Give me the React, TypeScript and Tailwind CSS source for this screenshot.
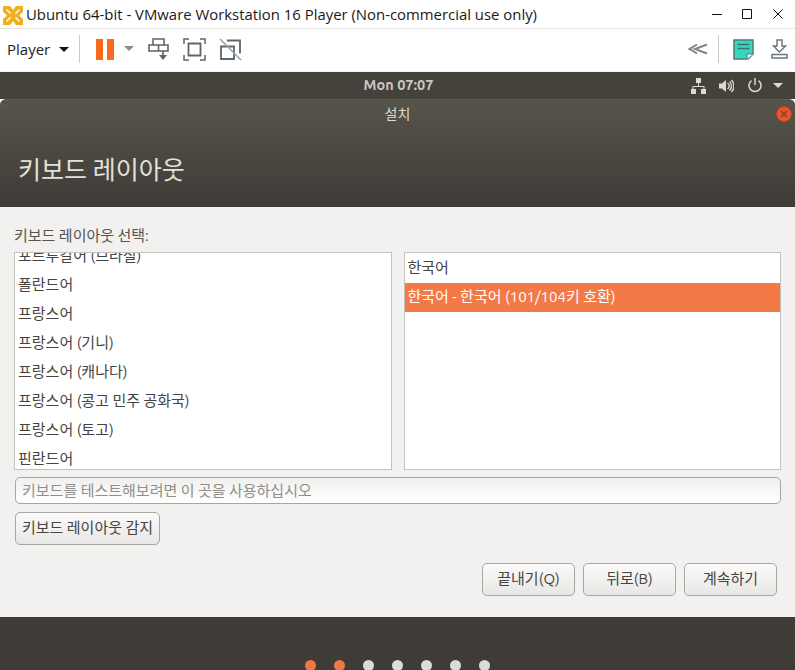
const KR = "font-['Ubuntu','Noto_Sans_CJK_KR','Noto_Sans',sans-serif]";

const layouts = ['포르투갈어 (브라질)', '폴란드어', '프랑스어', '프랑스어 (기니)', '프랑스어 (캐나다)', '프랑스어 (콩고 민주 공화국)', '프랑스어 (토고)', '핀란드어'];

const ListRow = ({ label, selected }: { label: string; selected?: boolean }) => (
  <div className={`h-[29px] shrink-0 pl-[3px] flex items-center text-[15px] ${selected ? 'bg-[#f37a47] text-white' : 'text-[#45443f]'}`}>
    {label}
  </div>
);

const GtkButton = ({ label, className }: { label: string; className: string }) => (
  <button className={`h-[33px] flex items-center justify-center rounded-[5px] border border-[#a8a6a2] bg-gradient-to-b from-[#fbfafa] to-[#e9e7e5] text-[15px] text-[#45443f] ${className}`}>
    {label}
  </button>
);

const VmwareLogo = () => (
  <svg width="22" height="22" viewBox="0 0 22 22">
    <rect x="1" y="3" width="20" height="19" fill="#f2ae1c" />
    <path d="M8 3h6l-3 4zM1 9v7l4-3.500zM21 9v7l-4-3.500zM8 22h6l-3-4z" fill="#fff" />
    <path d="M4.500 6.500L8.500 10.500M17.500 6.500l-4 4M4.500 18.500l4-4M17.500 18.500l-4-4" stroke="#fff" strokeWidth="1.500" />
  </svg>
);

const ToolbarIcons = () => (
  <>
    <div className="ml-[16px] flex gap-[4px]">
      <div className="w-[7px] h-[21px] bg-[#fb6a1c]" />
      <div className="w-[7px] h-[21px] bg-[#fb6a1c]" />
    </div>
    <svg className="ml-[10px]" width="10" height="6" viewBox="0 0 10 6"><path d="M0 0h10L5 5z" fill="#8b8b8b" /></svg>
    <svg className="ml-[14px]" width="21" height="23" viewBox="0 0 21 23" fill="none" stroke="#5d666d" strokeWidth="1.600">
      <path d="M5 1h11v6H5zM1 7h19v6H1zM10.500 7v6M15 13v4" />
      <path d="M11 17h8l-4 5z" fill="#5d666d" stroke="none" />
    </svg>
    <svg className="ml-[14px]" width="23" height="23" viewBox="0 0 23 23" fill="none" stroke="#5d666d" strokeWidth="1.500">
      <path d="M1 6V1h5M17 1h5v5M22 17v5h-5M6 22H1v-5" />
      <path d="M5.500 5.500h12v12h-12z" strokeWidth="1.800" />
    </svg>
    <svg className="ml-[13px]" width="23" height="23" viewBox="0 0 23 23" fill="none">
      <path d="M8 2.500h13v13M15 21H2V8.500h13z" stroke="#5d666d" strokeWidth="1.800" />
      <path d="M1 1l21 21" stroke="#9aa3aa" strokeWidth="1.600" />
    </svg>
  </>
);

const StatusIcons = () => (
  <div className="absolute right-[12px] top-0 h-full flex items-center">
    <svg width="15" height="16" viewBox="0 0 15 16" fill="#dcdad5">
      <path d="M5 0h5v5H5zM0 11h5v5H0zM10 11h5v5h-5z" />
      <path d="M7 5h1v3h5.500v3h-1V9h-10v2h-1V8H7z" />
    </svg>
    <svg className="ml-[13px]" width="15" height="14" viewBox="0 0 15 14" fill="none">
      <path d="M0 4.500h3L7 1v12L3 9.500H0z" fill="#dcdad5" />
      <path d="M8.500 4a3.500 3.500 0 0 1 0 6M10.500 2.500a6 6 0 0 1 0 9M12.500 1a8.500 8.500 0 0 1 0 12" stroke="#dcdad5" strokeWidth="1.400" />
    </svg>
    <svg className="ml-[14px]" width="14" height="15" viewBox="0 0 14 15" fill="none" stroke="#dcdad5" strokeWidth="1.500">
      <path d="M7 0v7" />
      <path d="M3.500 2.700a6 6 0 1 0 7 0" />
    </svg>
    <svg className="ml-[11px]" width="10" height="5" viewBox="0 0 10 5"><path d="M0 0h10L5 5z" fill="#dcdad5" /></svg>
  </div>
);

export default function App() {
  return (
    <div className="w-[795px] h-[670px] overflow-hidden flex flex-col bg-white">
      {/* vmware chrome */}
      <div className="h-[28px] shrink-0 flex items-center pl-[2px] relative">
        <VmwareLogo />
        <span className="ml-[2px] text-[14.900px] text-[#1a1a1a] font-['Open_Sans',sans-serif] whitespace-nowrap">
          Ubuntu 64-bit - VMware Workstation 16 Player (Non-commercial use only)
        </span>
        <div className="ml-auto flex items-center mr-[11px] gap-[20px]">
          <svg width="10" height="10" viewBox="0 0 10 10"><path d="M0 5.500h10" stroke="#111" /></svg>
          <svg width="11" height="11" viewBox="0 0 11 11"><path d="M.5.500h9v9h-9z" fill="none" stroke="#111" /></svg>
          <svg width="11" height="11" viewBox="0 0 11 11"><path d="M.5.500l9 9M9.500.500l-9 9" stroke="#111" /></svg>
        </div>
      </div>
      <div className="h-[44px] shrink-0 border-t border-[#e4e4e4] border-b-[1px] border-b-[#f4f4f4] flex items-center pl-[7px] pr-[7px] pb-[2px]">
        <span className="text-[15px] text-[#222] font-['Open_Sans',sans-serif]">Player</span>
        <svg className="ml-[9px]" width="10" height="5" viewBox="0 0 10 5"><path d="M0 0h10L5 5z" fill="#111" /></svg>
        <div className="ml-[10px] w-px h-[28px] bg-[#c9c9c9]" />
        <ToolbarIcons />
        <svg className="ml-auto" width="20" height="12" viewBox="0 0 20 12" fill="none" stroke="#7d868d" strokeWidth="2">
          <path d="M9 1.500L1.500 6 9 10.500M19 1.500L7 6l12 4.500" />
        </svg>
        <div className="ml-[10px] w-px h-[28px] bg-[#c9c9c9]" />
        <svg className="ml-[14px]" width="21" height="21" viewBox="0 0 21 21">
          <path d="M1 1h19v14l-5 5H1z" fill="#36d8bd" stroke="#4c7a7c" strokeWidth="1.500" />
          <path d="M4.500 5.500h12M4.500 9.500h12" stroke="#3f6f73" strokeWidth="1.500" />
          <path d="M14 20v-5h6" fill="#fff" stroke="#4c7a7c" />
        </svg>
        <svg className="ml-[17px]" width="17" height="20" viewBox="0 0 17 20" fill="none" stroke="#6d767d" strokeWidth="1.500">
          <path d="M6 1h5v6h3.500l-6 6-6-6H6zM1 15v4h15v-4" />
          <path d="M1 15.500h15" />
        </svg>
      </div>

      {/* gnome top bar */}
      <div className="h-[27px] shrink-0 relative flex items-center justify-center bg-[#45423c] font-['Ubuntu','Noto_Sans',sans-serif]">
        <span className="text-[14.500px] font-bold text-[#c9c7c2] pl-[2px] pb-[2px]">Mon 07:07</span>
        <StatusIcons />
      </div>

      {/* installer window */}
      <div className={`flex-1 min-h-0 flex flex-col ${KR}`}>
        <div className="h-[108px] shrink-0 rounded-t-[6px] border-t border-[#5e5b54] bg-gradient-to-b from-[#57544c] to-[#3f3c38] relative">
          <div className="h-[29px] flex items-center justify-center text-[14px] text-[#dfdbd2]">설치</div>
          <div className="absolute right-[3px] top-[6px] w-[16px] h-[16px] rounded-full bg-[#e9562a] border border-[#b9431f] flex items-center justify-center">
            <svg width="8" height="8" viewBox="0 0 8 8"><path d="M1 1l6 6M7 1l-6 6" stroke="#7d3a20" strokeWidth="1.200" /></svg>
          </div>
          <h1 className="mt-[26px] ml-[18px] text-[25px] leading-[30px] text-[#e4e1da] font-normal">키보드 레이아웃</h1>
        </div>

        <div className="h-[410px] shrink-0 bg-[#f2f1f0] flex flex-col px-[14px]">
          <p className="mt-[19px] h-[20px] leading-[20px] text-[15px] text-[#55544f]">키보드 레이아웃 선택:</p>
          <div className="mt-[6px] flex gap-[12px]">
            <div className="w-[378px] h-[218px] border border-[#c4c2be] bg-white overflow-hidden flex flex-col">
              <div className="-mt-[11px] flex flex-col">
                {layouts.map((item) => <ListRow key={item} label={item} />)}
              </div>
            </div>
            <div className="w-[378px] h-[218px] border border-[#c4c2be] bg-white overflow-hidden flex flex-col pt-[1px]">
              <ListRow label="한국어" />
              <ListRow label="한국어 - 한국어 (101/104키 호환)" selected />
            </div>
          </div>
          <div className="mt-[7px] ml-px w-[766px] h-[27px] rounded-[5px] border border-[#a8a6a2] bg-gradient-to-b from-[#f1f0ef] to-white flex items-center pl-[6px] pt-[1px] text-[15px] text-[#8f8e8a]">
            키보드를 테스트해보려면 이 곳을 사용하십시오
          </div>
          <div className="mt-[8px] ml-px">
            <GtkButton label="키보드 레이아웃 감지" className="w-[145px]" />
          </div>
          <div className="mt-[18px] mr-[4px] flex justify-end gap-[8px]">
            <GtkButton label="끝내기(Q)" className="w-[93px]" />
            <GtkButton label="뒤로(B)" className="w-[93px]" />
            <GtkButton label="계속하기" className="w-[93px]" />
          </div>
        </div>

        <div className="flex-1 min-h-0 bg-[#3f3c38] flex justify-center pt-[43px] gap-[18px] overflow-hidden">
          {[0, 1, 2, 3, 4, 5, 6].map((i) => (
            <div key={i} className={`w-[11px] h-[11px] shrink-0 rounded-full ${i < 2 ? 'bg-[#f07746]' : 'bg-[#dddcda]'}`} />
          ))}
        </div>
      </div>
    </div>
  );
}
